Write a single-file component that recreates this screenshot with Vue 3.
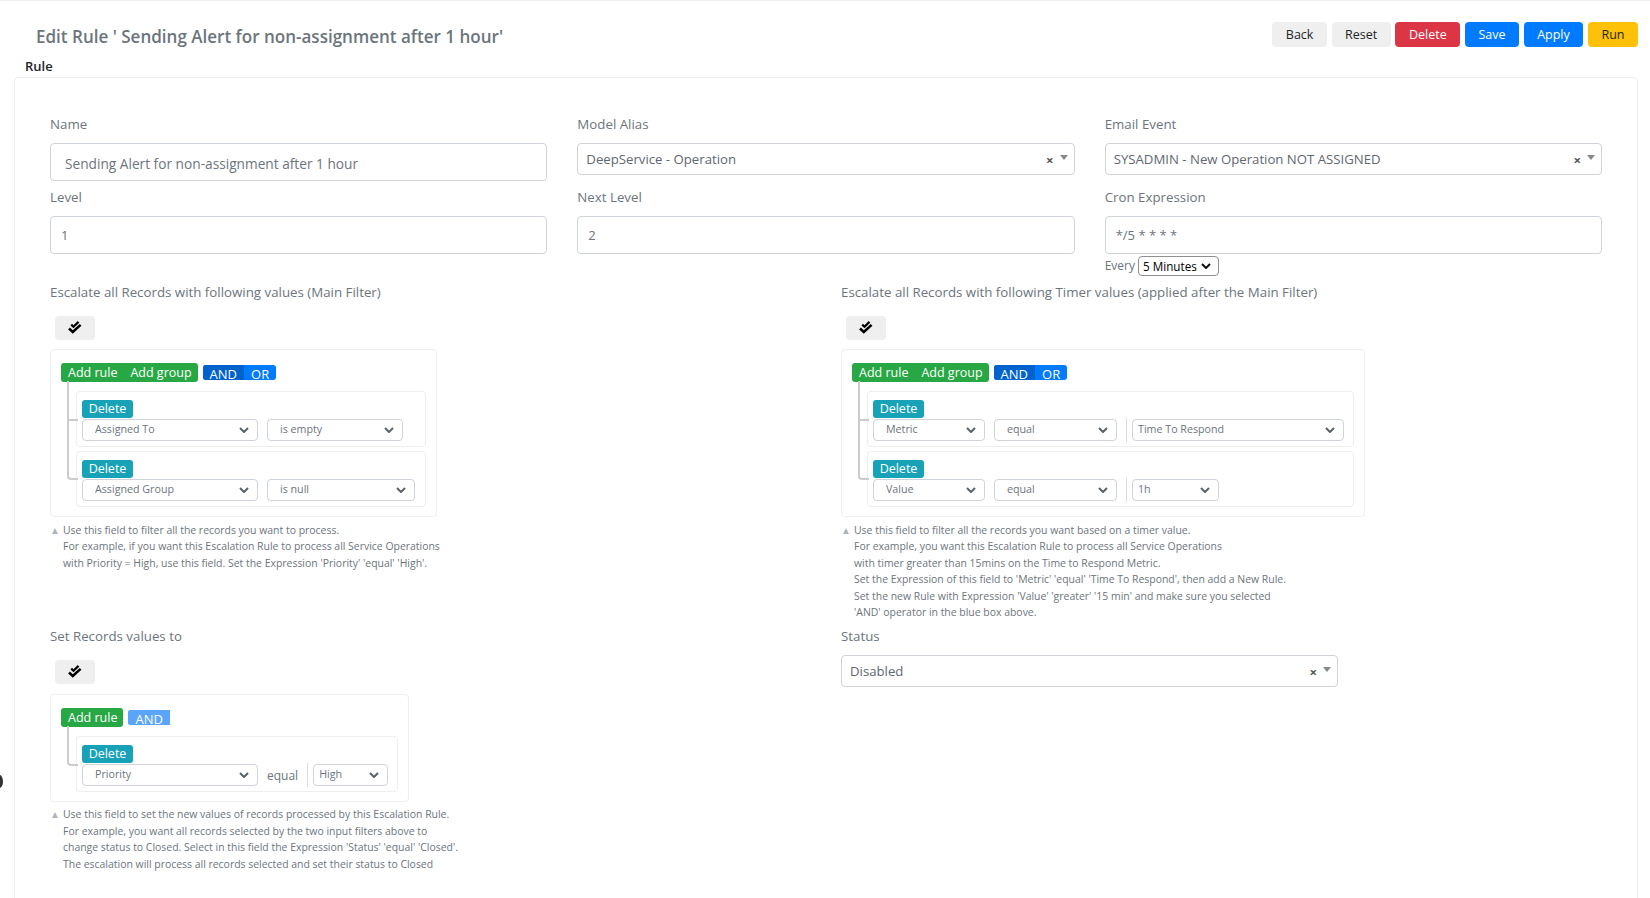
<template>
  <main class="page">
    <span class="edge-dot"></span>

    <header class="page-head">
      <h1 class="page-title">Edit Rule ' Sending Alert for non-assignment after 1 hour'</h1>
      <div class="actions">
        <button v-for="a in actions" :key="a.label" class="btn" :class="a.kind">{{ a.label }}</button>
      </div>
    </header>

    <div class="tab-label">Rule</div>

    <section class="card">
      <div class="fields">
        <div class="field">
          <label>Name</label>
          <input class="text-input name-input" value="Sending Alert for non-assignment after 1 hour" />
        </div>
        <div class="field">
          <label>Model Alias</label>
          <div class="pick"><span>DeepService - Operation</span><i class="pick-x">×</i><i class="pick-arrow"></i></div>
        </div>
        <div class="field">
          <label>Email Event</label>
          <div class="pick"><span>SYSADMIN - New Operation NOT ASSIGNED</span><i class="pick-x">×</i><i class="pick-arrow"></i></div>
        </div>
        <div class="field">
          <label>Level</label>
          <input class="text-input" value="1" />
        </div>
        <div class="field">
          <label>Next Level</label>
          <input class="text-input" value="2" />
        </div>
        <div class="field">
          <label>Cron Expression</label>
          <input class="text-input" value="*/5 * * * *" />
          <div class="every">
            <span class="every-label">Every</span>
            <select class="every-select"><option>5 Minutes</option></select>
          </div>
        </div>
      </div>

      <div class="filters">
        <div v-for="b in builders" :key="b.title" class="builder" :class="{ simple: !b.group }">
          <label>{{ b.title }}</label>
          <button class="check-btn">
            <svg width="14" height="13" viewBox="0 0 14 13" fill="none" stroke="#000" stroke-width="2.5">
              <path d="M1 7.5l3.8 3.5 7.8-7.2" />
              <path d="M3.2 3.6l2.3 2.2 5-4.9" stroke-width="2.2" />
            </svg>
          </button>
          <div class="qb" :style="{ width: b.width + 'px' }">
            <div class="qb-head">
              <div class="add-btns">
                <span>Add rule</span>
                <span v-if="b.group">Add group</span>
              </div>
              <div class="cond" :class="{ off: !b.group }">
                <span class="cond-on">AND</span>
                <span v-if="b.group">OR</span>
              </div>
            </div>
            <div class="rule" v-for="r in b.rules" :key="r.fields[0].text">
              <span class="del-btn">Delete</span>
              <div class="rule-line">
                <template v-for="(f, i) in r.fields" :key="i">
                  <span v-if="f.kind === 'sep'" class="sep"></span>
                  <span v-else-if="f.kind === 'plain'" class="plain-op">{{ f.text }}</span>
                  <select v-else class="qb-select" :class="{ tight: f.tight }" :style="{ width: f.width + 'px' }">
                    <option>{{ f.text }}</option>
                  </select>
                </template>
              </div>
            </div>
          </div>
          <div class="hint">
            <i class="hint-mark"></i>
            <p v-for="line in b.hint" :key="line">{{ line }}</p>
          </div>
        </div>

        <div class="status-field">
          <label>Status</label>
          <div class="pick"><span>Disabled</span><i class="pick-x">×</i><i class="pick-arrow"></i></div>
        </div>
      </div>
    </section>
  </main>
</template>

<script setup>
const actions = [
  { label: 'Back', kind: 'light' },
  { label: 'Reset', kind: 'light' },
  { label: 'Delete', kind: 'danger' },
  { label: 'Save', kind: 'primary' },
  { label: 'Apply', kind: 'primary' },
  { label: 'Run', kind: 'warning' }
]

const builders = [
  {
    title: 'Escalate all Records with following values (Main Filter)',
    width: 387,
    group: true,
    rules: [
      { fields: [{ text: 'Assigned To', width: 176 }, { text: 'is empty', width: 136 }] },
      { fields: [{ text: 'Assigned Group', width: 176 }, { text: 'is null', width: 148 }] }
    ],
    hint: [
      'Use this field to filter all the records you want to process.',
      'For example, if you want this Escalation Rule to process all Service Operations',
      "with Priority = High, use this field. Set the Expression 'Priority' 'equal' 'High'."
    ]
  },
  {
    title: 'Escalate all Records with following Timer values (applied after the Main Filter)',
    width: 524,
    group: true,
    rules: [
      { fields: [{ text: 'Metric', width: 112 }, { text: 'equal', width: 123 }, { kind: 'sep' }, { text: 'Time To Respond', width: 212, tight: true }] },
      { fields: [{ text: 'Value', width: 112 }, { text: 'equal', width: 123 }, { kind: 'sep' }, { text: '1h', width: 87, tight: true }] }
    ],
    hint: [
      'Use this field to filter all the records you want based on a timer value.',
      'For example, you want this Escalation Rule to process all Service Operations',
      'with timer greater than 15mins on the Time to Respond Metric.',
      "Set the Expression of this field to 'Metric' 'equal' 'Time To Respond', then add a New Rule.",
      "Set the new Rule with Expression 'Value' 'greater' '15 min' and make sure you selected",
      "'AND' operator in the blue box above."
    ]
  },
  {
    title: 'Set Records values to',
    width: 359,
    group: false,
    rules: [
      { fields: [{ text: 'Priority', width: 176 }, { kind: 'plain', text: 'equal' }, { kind: 'sep' }, { text: 'High', width: 75, tight: true }] }
    ],
    hint: [
      'Use this field to set the new values of records processed by this Escalation Rule.',
      'For example, you want all records selected by the two input filters above to',
      "change status to Closed. Select in this field the Expression 'Status' 'equal' 'Closed'.",
      'The escalation will process all records selected and set their status to Closed'
    ]
  }
]
</script>

<style scoped>
.page {
  position: relative;
  height: 898px;
  box-sizing: border-box;
  overflow: hidden;
  border-top: 1px solid #eee;
  padding: 21px 12px 0 14px;
  font-family: "Open Sans", "Noto Sans", Arial, sans-serif;
  font-size: 13px;
  color: #6c757d;
  background: #fff;
}
.edge-dot {
  position: absolute;
  left: -4px;
  top: 774px;
  width: 7px;
  height: 13px;
  border-radius: 50%;
  background: #333;
}
.page-head {
  display: flex;
  justify-content: space-between;
  height: 25px;
}
.page-title {
  margin: 2px 0 0 22px;
  font-size: 17.05px;
  font-weight: 600;
  line-height: 25px;
  color: #6c757d;
}
.actions { display: flex; gap: 4.7px; }
.btn {
  height: 25px;
  padding: 0 13.5px;
  border: 0;
  border-radius: 4px;
  font: inherit;
  font-size: 12.5px;
}
.light { background: #efefef; color: #212529; }
.danger { background: #dc3545; color: #fff; }
.primary { background: #007bff; color: #fff; }
.warning { background: #ffc107; color: #212529; }
.tab-label {
  margin: 11px 0 2px 11px;
  height: 17px;
  line-height: 17px;
  font-weight: 600;
  color: #212529;
}
.card {
  height: 840px;
  box-sizing: border-box;
  border: 1px solid #eee;
  border-radius: 4px;
  padding: 36px 35px 0 35px;
}
label {
  display: block;
  height: 21px;
  line-height: 21px;
  margin-bottom: 8px;
  font-size: 13.3px;
}
.fields {
  display: grid;
  grid-template-columns: repeat(3, 1fr);
  column-gap: 30px;
  row-gap: 6px;
}
.text-input {
  display: block;
  width: 100%;
  height: 38px;
  box-sizing: border-box;
  padding: 0 10px;
  border: 1px solid #ced4da;
  border-radius: 4px;
  font: inherit;
  color: #6c757d;
}
.name-input { padding: 2px 0 0 14px; font-size: 13.7px; }
.pick {
  position: relative;
  height: 32px;
  box-sizing: border-box;
  padding-left: 8px;
  border: 1px solid #d0d3d8;
  border-radius: 4px;
  font-size: 13.2px;
  line-height: 30px;
  color: #5f6770;
}
.pick-x {
  position: absolute;
  right: 20px;
  top: 1px;
  font-style: normal;
  font-weight: 700;
  color: #555;
}
.pick-arrow {
  position: absolute;
  right: 6px;
  top: 11px;
  border: 4px solid transparent;
  border-top: 5px solid #888;
  border-bottom: 0;
}
.every {
  display: flex;
  align-items: center;
  gap: 3px;
  height: 20px;
  margin-top: 2px;
  font-size: 12px;
}
.every-label { margin-bottom: 2px; }
.every-select {
  appearance: none;
  width: 81px;
  height: 20px;
  padding: 0 0 0 4px;
  border: 1px solid #8f8f8f;
  border-radius: 4px;
  background: #fff url("data:image/svg+xml,%3Csvg xmlns='http://www.w3.org/2000/svg' width='10' height='6' viewBox='0 0 10 6' fill='none' stroke='%23111' stroke-width='2'%3E%3Cpath d='M1 1l4 4 4-4'/%3E%3C/svg%3E") no-repeat right 7px center;
  font: inherit;
  font-size: 11.7px;
  color: #000;
}
.filters {
  display: grid;
  grid-template-columns: repeat(2, 1fr);
  column-gap: 30px;
  row-gap: 6px;
  margin-top: 6px;
}
.builder label { margin-bottom: 13px; }
.status-field .pick { width: 497px; }
.check-btn {
  display: flex;
  align-items: center;
  justify-content: center;
  width: 40px;
  height: 24px;
  margin-left: 5px;
  padding: 0 0 2px;
  border: 0;
  border-radius: 4px;
  background: #efefef;
}
.qb {
  margin-top: 9px;
  box-sizing: border-box;
  border: 1px solid #eee;
  border-radius: 4px;
  padding: 13px 10px 9px;
}
.simple .qb { margin-top: 10px; }
.qb-head {
  display: flex;
  align-items: center;
  gap: 5px;
  height: 19px;
  margin-bottom: 9px;
}
.add-btns {
  display: flex;
  gap: 13px;
  height: 19px;
  padding: 0 6px 0 7px;
  border-radius: 3px;
  background: #28a745;
  color: #fff;
  font-size: 12.5px;
  line-height: 19px;
}
.cond {
  display: flex;
  height: 15px;
  margin-top: -1px;
  border-radius: 3px;
  background: #007bff;
  color: #fff;
  line-height: 18px;
}
.cond span { padding: 0 7px; }
.cond .cond-on { background: #0062cc; border-radius: 3px 0 0 3px; }
.cond.off { background: #5aa5fa; }
.cond.off .cond-on { background: #5aa5fa; }
.rule {
  position: relative;
  margin: 0 0 4px 15px;
  padding: 8px 11px 5px 5px;
  border: 1px solid #eee;
  border-radius: 4px;
}
.rule:last-child { margin-bottom: 0; }
.rule::before {
  content: "";
  position: absolute;
  left: -10px;
  top: -11px;
  width: 9px;
  height: 38px;
  border-left: 2px solid #ccc;
  border-bottom: 2px solid #ccc;
}
.rule:nth-child(3)::before {
  top: -32px;
  height: 58px;
}
.rule:last-child::before { border-bottom-left-radius: 4px; }
.del-btn {
  display: block;
  width: 51px;
  height: 18px;
  margin-bottom: 1px;
  border-radius: 3px;
  background: #17a2b8;
  color: #fff;
  font-size: 12.5px;
  line-height: 18px;
  text-align: center;
}
.rule-line {
  display: flex;
  align-items: center;
  gap: 9px;
  height: 22px;
}
.qb-select {
  appearance: none;
  flex: none;
  height: 22px;
  padding: 0 0 2px 12px;
  border: 1px solid #ced4da;
  border-radius: 4px;
  background: #fff url("data:image/svg+xml,%3Csvg xmlns='http://www.w3.org/2000/svg' width='10' height='6' viewBox='0 0 10 6' fill='none' stroke='%235a6268' stroke-width='2'%3E%3Cpath d='M1 1l4 4 4-4'/%3E%3C/svg%3E") no-repeat right 8px center;
  font: inherit;
  font-size: 10.7px;
  color: #6c757d;
}
.qb-select.tight { padding-left: 5px; margin-left: -4px; }
.sep {
  flex: none;
  width: 1px;
  height: 24px;
  background: #ddd;
}
.plain-op { flex: none; font-size: 12px; color: #6c757d; }
.hint {
  position: relative;
  margin-top: 5px;
  padding-left: 13px;
  font-size: 10.45px;
  line-height: 16.4px;
}
.simple .hint { margin-top: 4px; }
.hint p { margin: 0; }
.hint-mark {
  position: absolute;
  left: 2px;
  top: 6px;
  border: 3.5px solid transparent;
  border-bottom: 6px solid #adb5bd;
  border-top: 0;
}
</style>
